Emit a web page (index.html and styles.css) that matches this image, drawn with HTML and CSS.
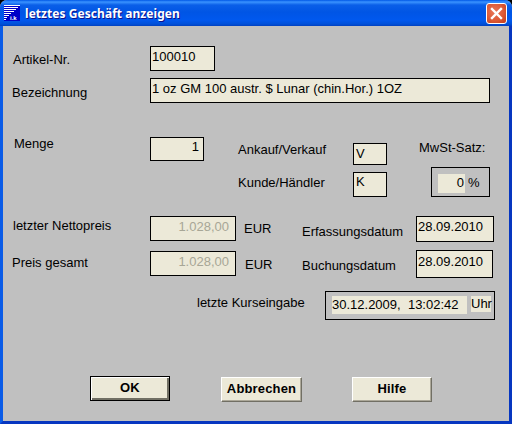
FILE: index.html
```html
<!DOCTYPE html>
<html lang="de">
<head>
<meta charset="utf-8">
<title>letztes Geschäft anzeigen</title>
<link rel="stylesheet" href="styles.css">
</head>
<body>
<div class="window">
  <header class="titlebar">
    <svg class="app-icon" width="16" height="16" viewBox="0 0 16 16" aria-hidden="true">
      <rect width="16" height="16" fill="#0000c8"/>
      <g fill="#fff">
        <rect x="0" y="0" width="16" height="1"/>
        <rect x="0" y="2" width="14" height="1"/>
        <rect x="0" y="4" width="12" height="1"/>
        <rect x="0" y="6" width="10" height="1"/>
        <rect x="0" y="8" width="7" height="1"/>
        <rect x="0" y="10" width="5" height="1"/>
        <rect x="0" y="12" width="3" height="1"/>
        <rect x="0" y="14" width="2" height="1"/>
      </g>
      <text class="icon-text" x="6" y="15">i.k</text>
    </svg>
    <span class="title">letztes Geschäft anzeigen</span>
    <button class="close" aria-label="Schließen">
      <svg width="13" height="13" viewBox="0 0 13 13" aria-hidden="true">
        <path d="M2 2 L11 11 M11 2 L2 11" stroke="#fff" stroke-width="2.4" stroke-linecap="square"/>
      </svg>
    </button>
  </header>

  <main class="form">
    <div class="row row-artikel">
      <span class="label lead nudge-artikel">Artikel-Nr.</span>
      <span class="field w-artikel">100010</span>
    </div>
    <div class="row row-bez">
      <span class="label lead">Bezeichnung</span>
      <span class="field w-bez">1 oz GM 100 austr. $ Lunar (chin.Hor.) 1OZ</span>
    </div>

    <section class="row row-menge">
      <span class="label lead nudge-menge">Menge</span>
      <span class="field right w-menge">1</span>
      <div class="trade">
        <div class="trade-row first">
          <span class="label w-trade">Ankauf/Verkauf</span>
          <span class="field w-code h-22">V</span>
        </div>
        <div class="trade-row second">
          <span class="label w-trade">Kunde/Händler</span>
          <span class="field w-code code-k">K</span>
        </div>
      </div>
      <div class="tax">
        <span class="label tax-label">MwSt-Satz:</span>
        <div class="group tax-group">
          <span class="inset w-tax">0</span>
          <span class="label pct">%</span>
        </div>
      </div>
    </section>

    <section class="prices">
      <div class="row row-price">
        <span class="label lead nudge-netto">letzter Nettopreis</span>
        <span class="field right disabled w-price">1.028,00</span>
        <span class="label eur">EUR</span>
        <span class="label w-date-label">Erfassungsdatum</span>
        <span class="field w-date">28.09.2010</span>
      </div>
      <div class="row row-price second-price">
        <span class="label lead">Preis gesamt</span>
        <span class="field right disabled w-price">1.028,00</span>
        <span class="label eur">EUR</span>
        <span class="label w-date-label">Buchungsdatum</span>
        <span class="field w-date date-tall">28.09.2010</span>
      </div>
    </section>

    <div class="row row-kurs">
      <span class="label kurs-label">letzte Kurseingabe</span>
      <div class="group kurs-group">
        <span class="inset w-stamp">30.12.2009,&nbsp; 13:02:42</span>
        <span class="inset w-uhr">Uhr</span>
      </div>
    </div>

    <footer class="buttons">
      <button class="btn default">OK</button>
      <button class="btn cancel">Abbrechen</button>
      <button class="btn help">Hilfe</button>
    </footer>
  </main>
</div>
</body>
</html>
```

FILE: styles.css
```css
* { box-sizing: border-box; }
html, body { margin: 0; padding: 0; background: #000; }
body { width: 512px; height: 424px; overflow: hidden; }

.window {
  width: 512px;
  height: 424px;
  display: flex;
  flex-direction: column;
  background: #c0c0c0;
  border-radius: 7px 7px 0 0;
  overflow: hidden;
  font: 13px "Liberation Sans", Arial, sans-serif;
  color: #000;
}

.titlebar {
  height: 26px;
  flex: none;
  display: flex;
  align-items: center;
  padding: 0 4px 0 4px;
  background: linear-gradient(180deg, #0058e6 0, #3a93ff 2px, #0a5fe8 5px, #0055e5 12px, #0058ee 20px, #0050d8 24px, #0040c0 26px);
}
.app-icon { flex: none; margin-right: 5px; }
.icon-text { font: bold 6px "Liberation Sans", sans-serif; fill: #fff; }
.title {
  flex: 1;
  font: bold 12px "Noto Sans", sans-serif;
  color: #fff;
  text-shadow: 1px 1px 0 #0f1089;
  letter-spacing: 0.05px;
}
.close {
  width: 21px;
  height: 21px;
  padding: 0;
  margin-right: 1px;
  display: flex;
  align-items: center;
  justify-content: center;
  border: 1px solid #fff;
  border-radius: 3px;
  background: radial-gradient(circle at 40% 40%, #e8775a 0, #dc5a36 55%, #c03a18 100%);
}

.form {
  flex: 1;
  background: #c0c0c0;
  display: flex;
  flex-direction: column;
  padding-top: 20px;
  border-style: solid;
  border-width: 0 3px 3px 3px;
  border-color: #0a5ce8 #0636c0 #0636c0 #0a5ce8;
}

.row { display: flex; align-items: flex-start; }
.label { display: block; line-height: 15px; white-space: nowrap; }
.lead { width: 147px; padding-left: 9px; flex: none; }

.field {
  display: block;
  flex: none;
  height: 25px;
  padding: 2px 0 0 2px;
  line-height: 15px;
  background: #ece9d8;
  border: 1px solid #000;
  white-space: nowrap;
}
.right { text-align: right; padding: 2px 4px 0 0; }
.disabled { color: #a7a696; padding-right: 6px; }

.row-artikel { height: 25px; }
.nudge-artikel { padding-top: 6px; padding-left: 10px; }
.w-artikel { width: 65px; padding-left: 1px; }

.row-bez { margin-top: 7px; height: 25px; }
.row-bez .lead { padding-top: 7px; }
.w-bez { width: 340px; padding-left: 1px; }

.row-menge { margin-top: 34px; height: 60px; }
.nudge-menge { padding-left: 11px; margin-top: -1px; margin-bottom: 1px; }
.w-menge { width: 54px; height: 24px; padding-top: 1px; }

.trade { width: 149px; margin-left: 34px; flex: none; }
.trade-row { display: flex; align-items: flex-start; }
.trade-row.first { margin-top: 5px; height: 30px; }
.w-trade { width: 115px; }
.second .w-trade { padding-top: 3px; }
.w-code { width: 34px; height: 25px; }
.code-k { padding-top: 1px; }
.h-22 { height: 22px; margin-top: 1px; }

.tax { margin-left: 32px; flex: none; }
.tax-label { margin-top: 3px; }
.tax-group { margin-top: 12px; margin-left: 12px; width: 59px; height: 30px; padding: 6px 0 0 6px; }

.group {
  display: flex;
  align-items: flex-start;
  border: 1px solid #000;
}
.inset { display: block; flex: none; background: #ece9d8; white-space: nowrap; }
.w-tax { width: 27px; height: 19px; line-height: 18px; text-align: right; padding-right: 1px; }
.pct { margin-left: 3px; padding-top: 1px; }

.prices { margin-top: 19px; height: 62px; }
.row-price { height: 26px; }
.second-price { margin-top: 9px; }
.nudge-netto { padding-left: 10px; padding-top: 2px; }
.second-price .lead { padding-top: 4px; }
.w-price { width: 86px; }
.eur { width: 66px; padding-left: 8px; padding-top: 5px; flex: none; }
.second-price .eur { padding-left: 9px; padding-top: 6px; }
.w-date-label { width: 114px; flex: none; padding-top: 8px; }
.second-price .w-date-label { padding-top: 7px; }
.w-date { width: 78px; height: 26px; padding-left: 1px; }
.date-tall { width: 77px; height: 28px; margin-top: -1px; padding-top: 3px; }

.row-kurs { margin-top: 13px; }
.kurs-label { width: 128px; margin-left: 194px; padding-top: 4px; flex: none; }
.kurs-group { width: 170px; height: 29px; padding: 4px 0 0 6px; }
.w-stamp { width: 135px; height: 18px; line-height: 18px; }
.w-uhr { width: 20px; height: 16px; line-height: 16px; margin-left: 4px; }

.buttons { display: flex; align-items: flex-start; margin-top: 56px; padding-left: 87px; }
.btn {
  flex: none;
  height: 25px;
  padding: 0 0 2px;
  font: bold 13px "Liberation Sans", Arial, sans-serif;
  letter-spacing: 0.15px;
  color: #000;
  background: #ece9d8;
  border: 1px solid;
  border-color: #fff #716f64 #716f64 #fff;
  box-shadow: inset -1px -1px 0 #aca899;
}
.default { width: 80px; border: 1px solid #000; box-shadow: inset 1px 1px 0 #fff, inset -2px -2px 0 #716f64; padding-bottom: 3px; }
.cancel { width: 81px; margin-left: 51px; margin-top: 1px; }
.help { width: 80px; margin-left: 50px; margin-top: 1px; }
```
